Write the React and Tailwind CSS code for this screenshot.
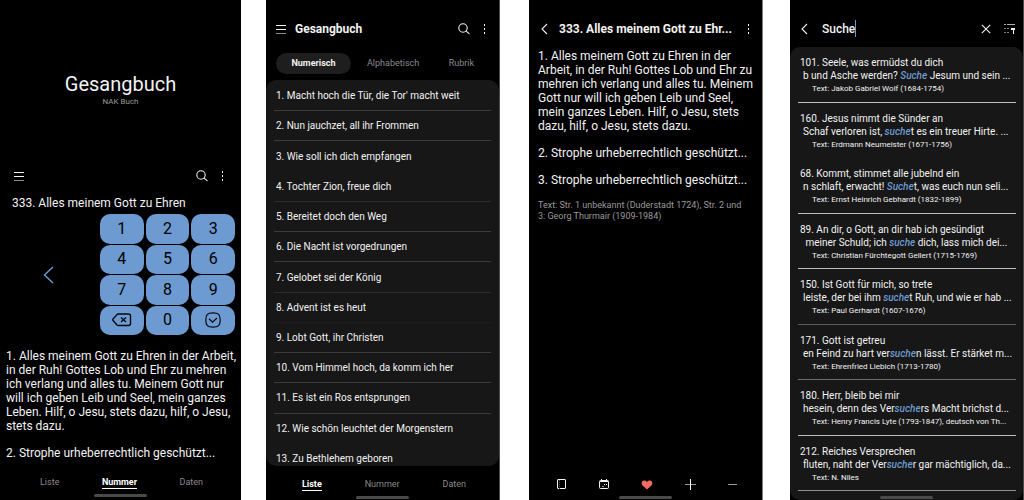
const songs = [
  ["1. Macht hoch die Tür, die Tor' macht weit", "border-[#3b3b3b]"],
  ["2. Nun jauchzet, all ihr Frommen", "border-[#3b3b3b]"],
  ["3. Wie soll ich dich empfangen", "border-transparent"],
  ["4. Tochter Zion, freue dich", "border-[#2c2c2c]"],
  ["5. Bereitet doch den Weg", "border-[#3b3b3b]"],
  ["6. Die Nacht ist vorgedrungen", "border-[#3b3b3b]"],
  ["7. Gelobet sei der König", "border-[#2c2c2c]"],
  ["8. Advent ist es heut", "border-[#1e1e1e]"],
  ["9. Lobt Gott, ihr Christen", "border-[#3b3b3b]"],
  ["10. Vom Himmel hoch, da komm ich her", "border-[#3b3b3b]"],
  ["11. Es ist ein Ros entsprungen", "border-[#3b3b3b]"],
  ["12. Wie schön leuchtet der Morgenstern", "border-transparent"],
  ["13. Zu Bethlehem geboren", "border-transparent"],
];

const results = [
  { title: "101. Seele, was ermüdst du dich", pre: "b und Asche werden? ", hit: "Suche", post: " Jesum und sein ...", meta: "Text: Jakob Gabriel Wolf (1684-1754)", line: "border-[#bdbdbd]" },
  { title: "160. Jesus nimmt die Sünder an", pre: "Schaf verloren ist, ", hit: "suche", post: "t es ein treuer Hirte. ...", meta: "Text: Erdmann Neumeister (1671-1756)", line: "border-transparent" },
  { title: "68. Kommt, stimmet alle jubelnd ein", pre: "n schlaft, erwacht! ", hit: "Suche", post: "t, was euch nun seli...", meta: "Text: Ernst Heinrich Gebhardt (1832-1899)", line: "border-[#bdbdbd]" },
  { title: "89. An dir, o Gott, an dir hab ich gesündigt", pre: " meiner Schuld; ich ", hit: "suche", post: " dich, lass mich dei...", meta: "Text: Christian Fürchtegott Gellert (1715-1769)", line: "border-[#bdbdbd]" },
  { title: "150. Ist Gott für mich, so trete", pre: "leiste, der bei ihm ", hit: "suche", post: "t Ruh, und wie er hab ...", meta: "Text: Paul Gerhardt (1607-1676)", line: "border-[#5a5a5a]" },
  { title: "171. Gott ist getreu", pre: "en Feind zu hart ver", hit: "suche", post: "n lässt. Er stärket m...", meta: "Text: Ehrenfried Liebich (1713-1780)", line: "border-[#6e6e6e]" },
  { title: "180. Herr, bleib bei mir", pre: "hesein, denn des Ver", hit: "suche", post: "rs Macht brichst d...", meta: "Text: Henry Francis Lyte (1793-1847), deutsch von Th...", line: "border-[#bdbdbd]" },
  { title: "212. Reiches Versprechen", pre: "fluten, naht der Ver", hit: "suche", post: "r gar mächtiglich, da...", meta: "Text: N. Niles", line: "border-[#8e8e8e]" },
];

function MenuIcon() {
  return (
    <svg width="10" height="10" viewBox="0 0 10 10" fill="none" stroke="#f2f2f2" shapeRendering="crispEdges">
      <path d="M0 1.5h10M0 5.5h10" />
      <path d="M0 9.5h10" stroke="#8a8a8a" />
    </svg>
  );
}

function SearchIcon() {
  return (
    <svg width="12" height="12" viewBox="0 0 12 12" fill="none" stroke="#f2f2f2" strokeWidth="1.1" strokeLinecap="round">
      <circle cx="5" cy="5" r="4.2" />
      <path d="M8.1 8.1l3 2.6" />
    </svg>
  );
}

function MoreIcon() {
  return (
    <svg width="4" height="10" viewBox="0 0 4 10" fill="#f2f2f2" shapeRendering="crispEdges">
      <path d="M1 0h1v2H1zM1 4h1v2H1zM1 8h1v2H1z" />
    </svg>
  );
}

function BackIcon() {
  return (
    <svg width="7" height="12" viewBox="0 0 7 12" fill="none" stroke="#f2f2f2" strokeWidth="1.1">
      <path d="M6 1L1 6l5 5" />
    </svg>
  );
}

function Tabs({ active }) {
  return (
    <nav className="flex justify-between text-[9px] leading-[12px]">
      {["Liste", "Nummer", "Daten"].map((t) => (
        <a
          key={t}
          href="#"
          className={t === active ? "border-b border-white font-bold text-white" : "border-b border-transparent text-[#8a8a8a]"}
        >
          {t}
        </a>
      ))}
    </nav>
  );
}

function HomeBar() {
  return <div className="mx-auto h-[3px] w-[53px] shrink-0 rounded-full bg-[#4a4a4a]" />;
}

function NumberScreen() {
  return (
    <section className="col-start-1 flex min-w-0 flex-col overflow-hidden bg-black text-[#f2f2f2]">
      <h1 className="pt-[72px] text-center text-[20px] leading-[24px]">Gesangbuch</h1>
      <p className="text-center text-[8px] leading-[12px] text-[#9a9a9a]">NAK Buch</p>
      <header className="mt-[62px] flex h-3 items-center pl-[14px] pr-4">
        <button aria-label="Menü"><MenuIcon /></button>
        <button aria-label="Suchen" className="ml-auto"><SearchIcon /></button>
        <button aria-label="Mehr" className="ml-[13px]"><MoreIcon /></button>
      </header>
      <h2 className="mt-[14px] pl-3 text-[12px] leading-[14px]">333. Alles meinem Gott zu Ehren</h2>
      <div className="mt-[4px] flex items-center justify-between pr-[6px]">
        <button aria-label="Zurück" className="ml-[43px]">
          <svg width="11" height="18" viewBox="0 0 11 18" fill="none" stroke="#6d9bd1" strokeWidth="1.4">
            <path d="M10 1L1.5 9l8.500 8" />
          </svg>
        </button>
        <div className="grid h-[121px] w-[135px] grid-cols-3 grid-rows-4 gap-x-[2px] gap-y-px text-[16px] text-black">
          {["1", "2", "3", "4", "5", "6", "7", "8", "9", "del", "0", "ok"].map((k) => (
            <button
              key={k}
              aria-label={k === "del" ? "Löschen" : k === "ok" ? "Bestätigen" : k}
              className="flex items-center justify-center rounded-[10px] bg-[#6d9bd1]"
            >
              {k === "del" ? (
                <svg width="20" height="14" viewBox="0 0 20 14" fill="none" stroke="#05090f" strokeWidth="1.4" strokeLinejoin="round">
                  <path d="M6.500 1H16.500Q18.500 1 18.500 3V10.500Q18.500 12.500 16.500 12.500H6.500Q5.500 12.500 5 12L1 7.500Q.6 6.800 1 6L5 1.600Q5.600 1 6.500 1Z" />
                  <path d="M9 4.500l5 4.500M14 4.500l-5 4.500" />
                </svg>
              ) : k === "ok" ? (
                <svg width="16" height="16" viewBox="0 0 16 16" fill="none" stroke="#05090f" strokeWidth="1.2">
                  <path d="M8 .8C13.500 .8 15.200 2.500 15.200 8S13.500 15.200 8 15.200 .8 13.500 .8 8 2.500 .8 8 .8Z" />
                  <path d="M4 6.800l3.500 3.400L12 6" />
                </svg>
              ) : (
                k
              )}
            </button>
          ))}
        </div>
      </div>
      <div className="mt-[14px] pl-[6px] pr-[2px] text-[12px] leading-[14px]">
        <p>
          1. Alles meinem Gott zu Ehren in der Arbeit, in der Ruh! Gottes Lob und Ehr zu mehren ich verlang und alles
          tu. Meinem Gott nur will ich geben Leib und Seel, mein ganzes Leben. Hilf, o Jesu, stets dazu, hilf, o Jesu,
          stets dazu.
        </p>
        <p className="mt-[13px]">2. Strophe urheberrechtlich geschützt...</p>
      </div>
      <div className="mt-auto pb-[3px]">
        <div className="pl-10 pr-[38px]"><Tabs active="Nummer" /></div>
        <div className="mt-[5px]"><HomeBar /></div>
      </div>
    </section>
  );
}

function ListScreen() {
  return (
    <section className="col-start-3 flex min-w-0 flex-col overflow-hidden border-r border-[#4a4a4a] bg-black text-[#f2f2f2]">
      <header className="mt-[22px] flex h-[14px] shrink-0 items-center pl-[10px] pr-3">
        <button aria-label="Menü"><MenuIcon /></button>
        <h1 className="ml-[9px] text-[12px] font-bold leading-[14px]">Gesangbuch</h1>
        <button aria-label="Suchen" className="ml-auto"><SearchIcon /></button>
        <button aria-label="Mehr" className="ml-[13px]"><MoreIcon /></button>
      </header>
      <div className="mt-[17px] flex h-[21px] shrink-0 items-center pl-[10px] pr-[25px] text-[9px]">
        <button className="h-[21px] w-[75px] rounded-full bg-[#1e1e1e] font-bold">Numerisch</button>
        <button className="ml-4 text-[#8a8a8a]">Alphabetisch</button>
        <button className="ml-auto text-[#8a8a8a]">Rubrik</button>
      </div>
      <div className="mt-[6px] flex min-h-0 flex-1 flex-col overflow-hidden rounded-[10px] bg-[#171717]">
        <ul className="-mb-[8px] flex flex-1 flex-col px-2 pt-px text-[10px]">
          {songs.map(([s, line]) => (
            <li key={s} className={"flex flex-1 items-center whitespace-nowrap border-b pl-[2px] " + line}>{s}</li>
          ))}
        </ul>
      </div>
      <div className="shrink-0 pb-px pt-3">
        <div className="pl-9 pr-[33px]"><Tabs active="Liste" /></div>
        <div className="mt-[5px]"><HomeBar /></div>
      </div>
    </section>
  );
}

function SongScreen() {
  return (
    <section className="col-start-5 flex min-w-0 flex-col overflow-hidden border-r border-[#808080] bg-black text-[#f2f2f2]">
      <header className="mt-[22px] flex h-[14px] items-center pl-3 pr-[11px]">
        <button aria-label="Zurück"><BackIcon /></button>
        <h1 className="ml-[11px] whitespace-nowrap text-[12px] font-bold leading-[14px]">333. Alles meinem Gott zu Ehr...</h1>
        <button aria-label="Mehr" className="ml-auto"><MoreIcon /></button>
      </header>
      <div className="mt-[13px] flex flex-col gap-[13px] pl-[9px] pr-2 text-[12px] leading-[14px]">
        <p>
          1. Alles meinem Gott zu Ehren in der Arbeit, in der Ruh! Gottes Lob und Ehr zu mehren ich verlang und alles
          tu. Meinem Gott nur will ich geben Leib und Seel, mein ganzes Leben. Hilf, o Jesu, stets dazu, hilf, o Jesu,
          stets dazu.
        </p>
        <p>2. Strophe urheberrechtlich geschützt...</p>
        <p>3. Strophe urheberrechtlich geschützt...</p>
      </div>
      <p className="mt-[13px] pl-[9px] pr-4 text-[9px] leading-[11px] text-[#9a9a9a]">
        Text: Str. 1 unbekannt (Duderstadt 1724), Str. 2 und 3: Georg Thurmair (1909-1984)
      </p>
      <div className="mt-auto flex items-center justify-between pl-[27px] pr-6">
        <button aria-label="Notizen">
          <svg width="11" height="11" viewBox="0 0 11 11" fill="none" stroke="#f2f2f2">
            <rect x="1.500" y=".5" width="8" height="9" rx=".5" />
            <path d="M3.500 1v9" stroke="#5a5a5a" strokeDasharray="1 1" />
          </svg>
        </button>
        <button aria-label="Kalender">
          <svg width="11" height="11" viewBox="0 0 11 11" fill="none" stroke="#f2f2f2">
            <rect x=".5" y="1.500" width="9" height="8" rx="1" />
            <path d="M1 2.500h8M2.500 0v2M7.500 0v2M5 5.500h1M7 5.500h1" />
            <path d="M3 7.500h2" stroke="#8a8a8a" />
          </svg>
        </button>
        <button aria-label="Favorit">
          <svg width="12" height="10" viewBox="0 0 12 10" fill="#f56a62">
            <path d="M6 9.500L1.800 5.800C-.2 4 .6.500 3.300.500 4.600.500 5.500 1.200 6 2 6.500 1.200 7.400.500 8.700.500c2.700 0 3.500 3.500 1.500 5.300Z" />
          </svg>
        </button>
        <button aria-label="Größer">
          <svg width="11" height="11" viewBox="0 0 11 11" shapeRendering="crispEdges">
            <path d="M0 5h11v1H0z" fill="#9a9a9a" />
            <path d="M5 0h1v11H5z" fill="#fff" />
          </svg>
        </button>
        <button aria-label="Kleiner">
          <svg width="11" height="11" viewBox="0 0 11 11" shapeRendering="crispEdges">
            <path d="M1 5h9v1H1z" fill="#9a9a9a" />
          </svg>
        </button>
      </div>
      <div className="mb-px mt-[6px]"><HomeBar /></div>
    </section>
  );
}

function SearchScreen() {
  return (
    <section className="col-start-7 flex min-w-0 flex-col overflow-hidden border-r border-[#4a4a4a] bg-black text-[#f2f2f2]">
      <header className="mt-5 flex h-[17px] shrink-0 items-center pl-[11px] pr-2">
        <button aria-label="Zurück"><BackIcon /></button>
        <input
          aria-label="Suche"
          defaultValue="Suche"
          className="ml-[14px] [field-sizing:content] bg-transparent text-[12px] font-medium leading-[14px] outline-none"
        />
        <span className="h-[17px] w-px bg-[#6d9bd1]" />
        <button aria-label="Leeren" className="ml-auto">
          <svg width="10" height="10" viewBox="0 0 10 10" fill="none" stroke="#f2f2f2" strokeWidth="1.1">
            <path d="M.8.8l8.400 8.400M9.200.8L.8 9.200" />
          </svg>
        </button>
        <button aria-label="Filter" className="ml-[13px]">
          <svg width="11" height="10" viewBox="0 0 11 10" shapeRendering="crispEdges">
            <path d="M0 0h2v1H0zM3 0h8v1H3z" fill="#b0b0b0" />
            <path d="M0 4h2v1H0zM3 4h2v1H3zM0 8h2v1H0zM3 8h2v1H3z" fill="#808080" />
            <path d="M7 4h4v2H9.500v4H8.500V6H7z" fill="#f2f2f2" />
          </svg>
        </button>
      </header>
      <div className="mt-[10px] flex min-h-0 flex-1 flex-col rounded-[10px] bg-[#171717]">
        <ul className="flex flex-1 flex-col pl-2 pr-[7px]">
          {results.map((r) => (
            <li key={r.title} className={"flex flex-1 flex-col justify-center whitespace-pre border-b pt-[3px] leading-[13px] " + r.line}>
              <p className="pl-[2px] text-[10px]">{r.title}</p>
              <p className="pl-[5px] text-[10px]">
                {r.pre}
                <em className="font-medium text-[#6d9bd1]">{r.hit}</em>
                {r.post}
              </p>
              <p className="pl-[14px] text-[8px]">{r.meta}</p>
            </li>
          ))}
        </ul>
        <div className="mb-px mt-[5px]"><HomeBar /></div>
      </div>
    </section>
  );
}

export default function App() {
  return (
    <main className="grid h-screen grid-cols-[241fr_25fr_234fr_29fr_234fr_27fr_234fr] grid-rows-1 overflow-hidden bg-white font-['Roboto',sans-serif]">
      <NumberScreen />
      <ListScreen />
      <SongScreen />
      <SearchScreen />
    </main>
  );
}
